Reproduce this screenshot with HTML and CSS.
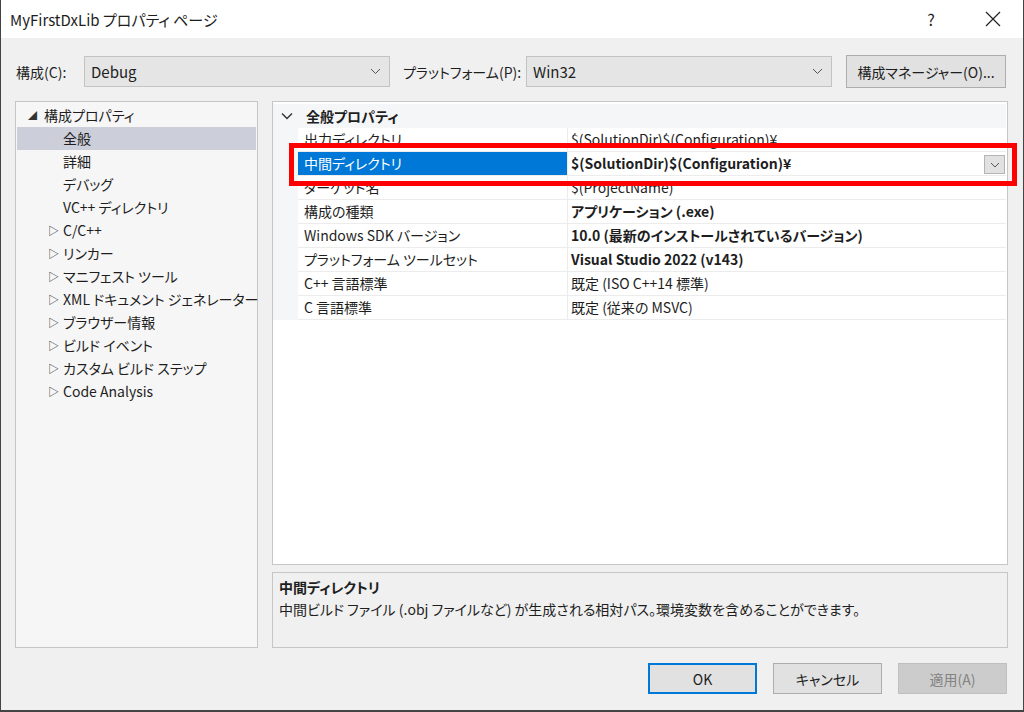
FILE: index.html
```html
<!DOCTYPE html>
<html lang="ja">
<head>
    <meta charset="UTF-8">
    <title>MyFirstDxLib プロパティ ページ</title>
    <link rel="stylesheet" href="styles.css">
</head>
<body>
<div class="window">
  <div class="titlebar">
    <span class="title">MyFirstDxLib プロパティ ページ</span>
    <span class="help">?</span>
    <span class="close">
      <svg width="16" height="16" viewBox="0 0 16 16"><path d="M1 1 L15 15 M15 1 L1 15" stroke="#222" stroke-width="1.2" fill="none"/></svg>
    </span>
  </div>

  <div class="content">
    <div class="config-row">
      <span class="label cfg-label">構成(C):</span>
      <div class="combo">
        <span>Debug</span>
        <svg class="arrow" width="11" height="7" viewBox="0 0 11 7"><path d="M1 1 L5.5 5.5 L10 1" stroke="#555" fill="none"/></svg>
      </div>
      <span class="label plat-label">プラットフォーム(P):</span>
      <div class="combo">
        <span>Win32</span>
        <svg class="arrow" width="11" height="7" viewBox="0 0 11 7"><path d="M1 1 L5.5 5.5 L10 1" stroke="#555" fill="none"/></svg>
      </div>
      <button class="btn manager">構成マネージャー(O)...</button>
    </div>

    <div class="main">
      <div class="tree">
        <div class="node root"><span class="expander">◢</span>構成プロパティ</div>
        <div class="node leaf selected">全般</div>
        <div class="node leaf">詳細</div>
        <div class="node leaf">デバッグ</div>
        <div class="node leaf">VC++ ディレクトリ</div>
        <div class="node branch"><span class="expander">▷</span>C/C++</div>
        <div class="node branch"><span class="expander">▷</span>リンカー</div>
        <div class="node branch"><span class="expander">▷</span>マニフェスト ツール</div>
        <div class="node branch"><span class="expander">▷</span>XML ドキュメント ジェネレーター</div>
        <div class="node branch"><span class="expander">▷</span>ブラウザー情報</div>
        <div class="node branch"><span class="expander">▷</span>ビルド イベント</div>
        <div class="node branch"><span class="expander">▷</span>カスタム ビルド ステップ</div>
        <div class="node branch"><span class="expander">▷</span>Code Analysis</div>
      </div>

      <div class="right">
        <div class="grid">
          <div class="grid-header">
            <svg class="chevron" width="12" height="8" viewBox="0 0 12 8"><path d="M1 1.5 L6 6.5 L11 1.5" stroke="#333" stroke-width="1.4" fill="none"/></svg>
            <span>全般プロパティ</span>
          </div>
          <div class="prop"><div class="name">出力ディレクトリ</div><div class="value">$(SolutionDir)$(Configuration)¥</div></div>
          <div class="prop current">
            <div class="name">中間ディレクトリ</div>
            <div class="value bold">$(SolutionDir)$(Configuration)¥
              <span class="drop">
                <svg width="10" height="6" viewBox="0 0 10 6"><path d="M1 1 L5 5 L9 1" stroke="#555" fill="none"/></svg>
              </span>
            </div>
          </div>
          <div class="prop"><div class="name">ターゲット名</div><div class="value">$(ProjectName)</div></div>
          <div class="prop"><div class="name">構成の種類</div><div class="value bold">アプリケーション (.exe)</div></div>
          <div class="prop"><div class="name">Windows SDK バージョン</div><div class="value bold">10.0 (最新のインストールされているバージョン)</div></div>
          <div class="prop"><div class="name">プラットフォーム ツールセット</div><div class="value bold">Visual Studio 2022 (v143)</div></div>
          <div class="prop"><div class="name">C++ 言語標準</div><div class="value">既定 (ISO C++14 標準)</div></div>
          <div class="prop"><div class="name">C 言語標準</div><div class="value">既定 (従来の MSVC)</div></div>
          <div class="highlight"></div>
        </div>
        <div class="desc">
          <div class="desc-title">中間ディレクトリ</div>
          <div class="desc-text">中間ビルド ファイル (.obj ファイルなど) が生成される相対パス。環境変数を含めることができます。</div>
        </div>
      </div>
    </div>

    <div class="footer">
      <button class="btn ok">OK</button>
      <button class="btn">キャンセル</button>
      <button class="btn disabled">適用(A)</button>
    </div>
  </div>
</div>
</body>
</html>
```

FILE: styles.css
```css
* {
  box-sizing: border-box;
}

html, body {
  margin: 0;
  padding: 0;
}

body {
  width: 1024px;
  height: 712px;
  font-family: "Noto Sans CJK JP", "Noto Sans", sans-serif;
  font-size: 14px;
  font-feature-settings: "palt";
  color: #1e1e1e;
  background: #3a3a3a;
}

.window {
  width: 1024px;
  height: 712px;
  border-left: 1px solid #444;
  border-right: 1px solid #444;
  border-bottom: 2px solid #444;
  background: #f0f0f0;
  display: flex;
  flex-direction: column;
}

.titlebar {
  height: 38px;
  background: #fff;
  display: flex;
  align-items: center;
  padding-left: 9px;
}

.title {
  font-size: 15px;
  flex: 1;
}

.help {
  font-size: 16px;
  width: 20px;
  text-align: center;
  margin-right: 44px;
}

.close {
  width: 16px;
  height: 16px;
  margin-right: 22px;
  display: flex;
}

.content {
  flex: 1;
  display: flex;
  flex-direction: column;
  padding: 0 15px 0 14px;
}

.config-row {
  display: flex;
  align-items: center;
  margin-top: 17px;
  height: 33px;
}

.label {
  font-size: 14px;
  white-space: nowrap;
}

.cfg-label {
  width: 69px;
  padding-left: 1px;
}

.plat-label {
  width: 123px;
  margin-left: 13px;
}

.combo {
  width: 306px;
  height: 31px;
  background: #e5e5e5;
  border: 1px solid #c3c3c3;
  display: flex;
  align-items: center;
  padding: 0 8px 0 6px;
  font-size: 15px;
}

.combo span {
  flex: 1;
}

.btn {
  font-family: inherit;
  font-feature-settings: "palt";
  font-size: 14px;
  color: #1e1e1e;
  background: #e1e1e1;
  border: 1px solid #adadad;
  width: 109px;
  height: 31px;
  padding: 0;
  white-space: nowrap;
}

.manager {
  width: 160px;
  height: 33px;
  margin-left: 14px;
}

.main {
  display: flex;
  margin-top: 13px;
  height: 547px;
  gap: 14px;
}

.tree {
  width: 243px;
  border: 1px solid #c6c6c6;
  background: #f6f6f6;
  padding: 2px 1px;
}

.node {
  height: 23px;
  line-height: 23px;
  white-space: nowrap;
  position: relative;
}

.node.root {
  padding-left: 27px;
}

.node.leaf,
.node.branch {
  padding-left: 46px;
}

.expander {
  position: absolute;
  font-size: 9px;
  color: #333;
}

.root .expander {
  left: 11px;
}

.branch .expander {
  left: 31px;
  font-size: 11px;
}

.selected {
  background: #ccceda;
}

.right {
  flex: 1;
  display: flex;
  flex-direction: column;
  gap: 7px;
}

.grid {
  position: relative;
  height: 464px;
  border: 1px solid #c6c6c6;
  background: #fff;
  padding-top: 2px;
}

.grid-header {
  height: 24px;
  display: flex;
  align-items: center;
  background: #f5f6f8;
  font-weight: bold;
  margin-right: 1px;
}

.chevron {
  margin-left: 8px;
  margin-right: 13px;
}

.prop {
  display: flex;
  height: 24px;
  padding-left: 25px;
  background: #f5f6f8;
  margin-right: 1px;
}

.prop .name,
.prop .value {
  background: #fff;
  border-bottom: 1px solid #ececec;
  line-height: 23px;
  white-space: nowrap;
  display: flex;
  align-items: center;
}

.prop .name {
  width: 270px;
  padding-left: 6px;
  border-right: 1px solid #ececec;
}

.prop .value {
  flex: 1;
  padding-left: 3px;
}

.bold {
  font-weight: bold;
}

.current .name {
  background: #0078d7;
  color: #fff;
}

.current .value {
  position: relative;
}

.drop {
  position: absolute;
  right: 1px;
  top: 3px;
  width: 21px;
  height: 19px;
  background: #e1e1e1;
  border: 1px solid #b4b4b4;
  display: flex;
  align-items: center;
  justify-content: center;
}

.highlight {
  position: absolute;
  left: 16px;
  top: 41px;
  width: 728px;
  height: 43px;
  border: 5px solid #ff0000;
}

.desc {
  height: 76px;
  border: 1px solid #c6c6c6;
  background: #f0f0f0;
  padding: 4px 6px;
}

.desc-title {
  font-weight: bold;
  line-height: 20px;
}

.desc-text {
  line-height: 24px;
}

.footer {
  display: flex;
  justify-content: flex-end;
  gap: 16px;
  margin-top: 15px;
  padding-right: 1px;
}

.ok {
  border: 2px solid #0078d7;
}

.disabled {
  background: #cccccc;
  border-color: #bfbfbf;
  color: #838383;
}
```
